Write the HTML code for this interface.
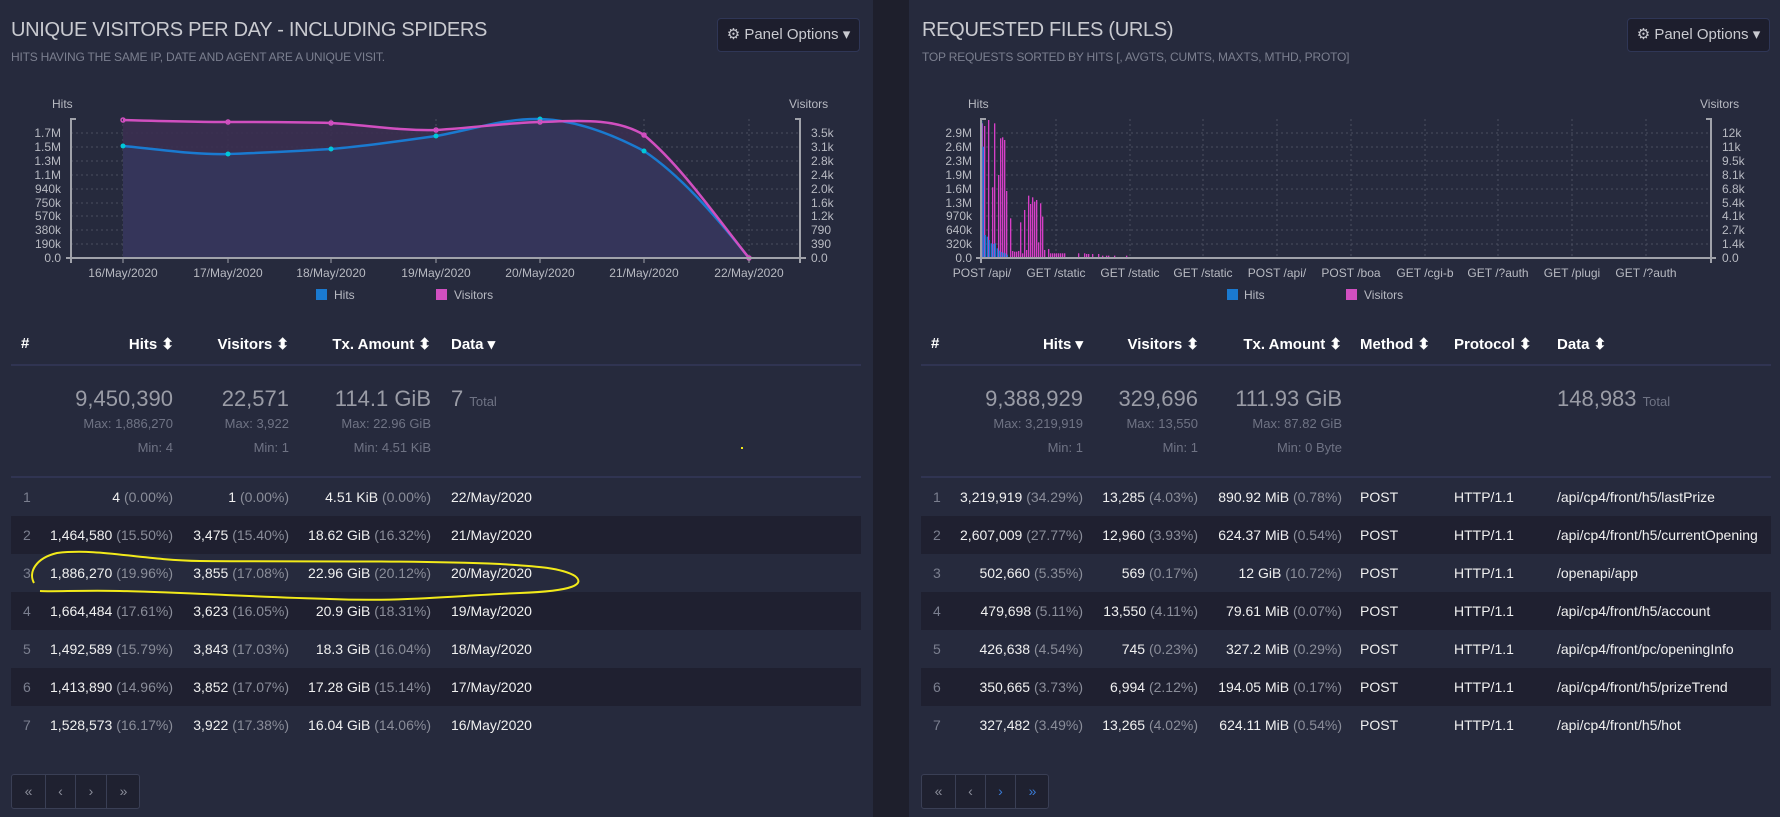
<!DOCTYPE html>
<html><head><meta charset="utf-8">
<style>
*{margin:0;padding:0;box-sizing:border-box}
body{width:1780px;height:817px;background:#262a3d;font-family:"Liberation Sans",sans-serif;position:relative;overflow:hidden;color:#e8e8e8}
.strip{position:absolute;left:873px;top:0;width:36px;height:817px;background:#1e1f2c}
.a{position:absolute;white-space:nowrap}
.title{font-size:20px;color:#c9cad0;letter-spacing:-0.3px}
.sub{font-size:12px;color:#7b7f8f;letter-spacing:-0.2px}
.btn{position:absolute;height:34px;width:143px;background:#1d1e2d;border:1px solid #2f3656;border-radius:4px;color:#c9cad0;font-size:15px;line-height:32px;text-align:center}
.hd{font-weight:bold;font-size:15px;color:#fff}
.r{text-align:right}
.big{font-size:22px;color:#9a9ca6}
.sm{font-size:13px;color:#6f7384}
.row{position:absolute;height:38px}
.band{background:#1f2030}
.t{font-size:14px;color:#f0f0f0}
.p{color:#8a8d99}
.n{font-size:14px;color:#7b7f8f}
.pg{position:absolute;height:35px;border:1px solid #3a3f55;border-radius:3px;background:#1f2130}
.pg span{position:absolute;top:0;height:33px;line-height:32px;text-align:center;color:#8a8d99;font-size:14px;border-right:1px solid #3a3f55}
.w{position:absolute;left:0;width:1780px;height:270px}
</style></head><body>
<div class="strip"></div>

<div class="a title" style="left:11px;top:19px">UNIQUE VISITORS PER DAY - INCLUDING SPIDERS</div>
<div class="a sub" style="left:11px;top:50px">HITS HAVING THE SAME IP, DATE AND AGENT ARE A UNIQUE VISIT.</div>
<div class="btn" style="left:717px;top:18px">&#9881; Panel Options &#9662;</div>

<div class="a title" style="left:922px;top:19px">REQUESTED FILES (URLS)</div>
<div class="a sub" style="left:922px;top:50px">TOP REQUESTS SORTED BY HITS [, AVGTS, CUMTS, MAXTS, MTHD, PROTO]</div>
<div class="btn" style="left:1627px;top:18px">&#9881; Panel Options &#9662;</div>

<svg width="1780" height="817" style="position:absolute;left:0;top:0" font-family="Liberation Sans, sans-serif">
<g font-size="12" fill="#b8bac2">
<text x="52" y="108">Hits</text>
<text x="789" y="108">Visitors</text>
<text x="968" y="108">Hits</text>
<text x="1700" y="108">Visitors</text>
</g>
<g stroke="#4a4e60" stroke-width="1" stroke-dasharray="2,3">
<line x1="71" x2="800" y1="133" y2="133"/><line x1="71" x2="800" y1="147" y2="147"/><line x1="71" x2="800" y1="161" y2="161"/><line x1="71" x2="800" y1="175" y2="175"/><line x1="71" x2="800" y1="189" y2="189"/><line x1="71" x2="800" y1="203" y2="203"/><line x1="71" x2="800" y1="216" y2="216"/><line x1="71" x2="800" y1="230" y2="230"/><line x1="71" x2="800" y1="244" y2="244"/>
<line x1="123" x2="123" y1="119" y2="258"/><line x1="228" x2="228" y1="119" y2="258"/><line x1="331" x2="331" y1="119" y2="258"/><line x1="436" x2="436" y1="119" y2="258"/><line x1="540" x2="540" y1="119" y2="258"/><line x1="644" x2="644" y1="119" y2="258"/><line x1="749" x2="749" y1="119" y2="258"/>
</g>
<path d="M123,120 C158,121 193,122 228,122 C262,122 297,122 331,123 C366,125 401,131 436,130 C471,128 505,123 540,122 C575,121 615,117 644,135 C680,165 715,215 749,258 L123,258Z" fill="#3b2f50" opacity="0.9"/>
<path d="M123,146 C158,149 193,155 228,154 C262,153 297,151 331,149 C366,146 401,141 436,136 C471,130 505,118 540,119 C575,120 610,133 644,151 C680,175 715,215 749,258 L123,258Z" fill="#35355a"/>
<path d="M123,146 C158,149 193,155 228,154 C262,153 297,151 331,149 C366,146 401,141 436,136 C471,130 505,118 540,119 C575,120 610,133 644,151 C680,175 715,215 749,258" fill="none" stroke="#1a7ad0" stroke-width="2.5"/>
<path d="M123,120 C158,121 193,122 228,122 C262,122 297,122 331,123 C366,125 401,131 436,130 C471,128 505,123 540,122 C575,121 615,117 644,135 C680,165 715,215 749,258" fill="none" stroke="#d14fc0" stroke-width="2.5"/>
<g fill="#00c8d8"><circle cx="123" cy="146" r="2.5"/><circle cx="228" cy="154" r="2.5"/><circle cx="331" cy="149" r="2.5"/><circle cx="436" cy="136" r="2.5"/><circle cx="540" cy="119" r="2.5"/><circle cx="644" cy="151" r="2.5"/></g>
<g fill="none" stroke="#d14fc0" stroke-width="1.5"><circle cx="123" cy="120" r="2"/><circle cx="228" cy="122" r="2"/><circle cx="331" cy="123" r="2"/><circle cx="436" cy="130" r="2"/><circle cx="540" cy="122" r="2"/><circle cx="644" cy="135" r="2"/><circle cx="749" cy="258" r="2"/></g>
<g stroke="#a0a2aa" stroke-width="2" fill="none">
<path d="M76,119 H71 V263"/><path d="M66,258 H806"/><path d="M795,119 H800 V263"/>
</g>
<g stroke="#a0a2aa" stroke-width="1"><line x1="123" x2="123" y1="258" y2="263"/><line x1="228" x2="228" y1="258" y2="263"/><line x1="331" x2="331" y1="258" y2="263"/><line x1="436" x2="436" y1="258" y2="263"/><line x1="540" x2="540" y1="258" y2="263"/><line x1="644" x2="644" y1="258" y2="263"/><line x1="749" x2="749" y1="258" y2="263"/></g>
<g font-size="12" fill="#b8bac2" text-anchor="end">
<text x="61" y="137">1.7M</text><text x="61" y="151">1.5M</text><text x="61" y="165">1.3M</text><text x="61" y="179">1.1M</text><text x="61" y="193">940k</text><text x="61" y="207">750k</text><text x="61" y="220">570k</text><text x="61" y="234">380k</text><text x="61" y="248">190k</text><text x="61" y="262">0.0</text>
</g>
<g font-size="12" fill="#b8bac2">
<text x="811" y="137">3.5k</text><text x="811" y="151">3.1k</text><text x="811" y="165">2.8k</text><text x="811" y="179">2.4k</text><text x="811" y="193">2.0k</text><text x="811" y="207">1.6k</text><text x="811" y="220">1.2k</text><text x="811" y="234">790</text><text x="811" y="248">390</text><text x="811" y="262">0.0</text>
</g>
<g font-size="12" fill="#b8bac2" text-anchor="middle">
<text x="123" y="277">16/May/2020</text><text x="228" y="277">17/May/2020</text><text x="331" y="277">18/May/2020</text><text x="436" y="277">19/May/2020</text><text x="540" y="277">20/May/2020</text><text x="644" y="277">21/May/2020</text><text x="749" y="277">22/May/2020</text>
</g>
<rect x="316" y="289" width="11" height="11" fill="#1a7ad0"/><text x="334" y="299" font-size="12" fill="#b8bac2">Hits</text>
<rect x="436" y="289" width="11" height="11" fill="#d14fc0"/><text x="454" y="299" font-size="12" fill="#b8bac2">Visitors</text>

<g stroke="#4a4e60" stroke-width="1" stroke-dasharray="2,3">
<line x1="981" x2="1711" y1="133" y2="133"/><line x1="981" x2="1711" y1="147" y2="147"/><line x1="981" x2="1711" y1="161" y2="161"/><line x1="981" x2="1711" y1="175" y2="175"/><line x1="981" x2="1711" y1="189" y2="189"/><line x1="981" x2="1711" y1="203" y2="203"/><line x1="981" x2="1711" y1="216" y2="216"/><line x1="981" x2="1711" y1="230" y2="230"/><line x1="981" x2="1711" y1="244" y2="244"/>
<line x1="1056" x2="1056" y1="119" y2="258"/><line x1="1130" x2="1130" y1="119" y2="258"/><line x1="1203" x2="1203" y1="119" y2="258"/><line x1="1277" x2="1277" y1="119" y2="258"/><line x1="1351" x2="1351" y1="119" y2="258"/><line x1="1425" x2="1425" y1="119" y2="258"/><line x1="1498" x2="1498" y1="119" y2="258"/><line x1="1572" x2="1572" y1="119" y2="258"/><line x1="1646" x2="1646" y1="119" y2="258"/>
</g>
<g transform="translate(960,100) scale(0.3333)">
<g fill="#d63fc6">
<rect x="65" y="70" width="4" height="402"/><rect x="72" y="78" width="4" height="394"/><rect x="84" y="60" width="4" height="412"/><rect x="96" y="262" width="4" height="210"/><rect x="102" y="70" width="4" height="402"/><rect x="114" y="225" width="4" height="247"/><rect x="120" y="115" width="4" height="357"/><rect x="126" y="112" width="4" height="360"/><rect x="132" y="120" width="4" height="352"/><rect x="138" y="273" width="4" height="199"/><rect x="150" y="355" width="4" height="117"/><rect x="156" y="453" width="4" height="19"/><rect x="162" y="455" width="4" height="17"/><rect x="168" y="455" width="4" height="17"/><rect x="174" y="453" width="4" height="19"/><rect x="180" y="367" width="4" height="105"/><rect x="186" y="460" width="4" height="12"/><rect x="192" y="330" width="4" height="142"/><rect x="198" y="450" width="4" height="22"/><rect x="204" y="287" width="4" height="185"/><rect x="210" y="312" width="4" height="160"/><rect x="216" y="292" width="4" height="180"/><rect x="222" y="305" width="4" height="167"/><rect x="228" y="300" width="4" height="172"/><rect x="234" y="427" width="4" height="45"/><rect x="240" y="310" width="4" height="162"/><rect x="246" y="350" width="4" height="122"/><rect x="252" y="450" width="4" height="22"/><rect x="264" y="447" width="4" height="25"/>
<rect x="270" y="460" width="4" height="12"/><rect x="276" y="460" width="4" height="12"/><rect x="282" y="460" width="4" height="12"/><rect x="288" y="460" width="4" height="12"/><rect x="294" y="460" width="4" height="12"/><rect x="300" y="460" width="4" height="12"/><rect x="306" y="460" width="4" height="12"/><rect x="312" y="460" width="4" height="12"/><rect x="354" y="460" width="4" height="12"/><rect x="372" y="460" width="4" height="12"/><rect x="378" y="462" width="4" height="10"/><rect x="384" y="462" width="4" height="10"/><rect x="396" y="462" width="4" height="10"/><rect x="414" y="462" width="4" height="10"/><rect x="426" y="467" width="4" height="5"/><rect x="438" y="467" width="4" height="5"/><rect x="444" y="467" width="4" height="5"/><rect x="462" y="467" width="4" height="5"/><rect x="498" y="467" width="4" height="5"/>
</g>
<g fill="#1a7ad0">
<rect x="62" y="62" width="5" height="410"/><rect x="68" y="140" width="4" height="332"/><rect x="74" y="405" width="4" height="67"/><rect x="80" y="410" width="4" height="62"/><rect x="86" y="420" width="4" height="52"/><rect x="92" y="430" width="4" height="42"/><rect x="98" y="432" width="4" height="40"/><rect x="104" y="430" width="4" height="42"/><rect x="110" y="445" width="4" height="27"/><rect x="116" y="452" width="4" height="20"/><rect x="122" y="456" width="4" height="16"/><rect x="128" y="458" width="4" height="14"/><rect x="134" y="460" width="4" height="12"/><rect x="140" y="464" width="4" height="8"/>
</g>
</g>
<g stroke="#a0a2aa" stroke-width="2" fill="none">
<path d="M986,119 H981 V263"/><path d="M976,258 H1716"/><path d="M1706,119 H1711 V263"/>
</g>
<g font-size="12" fill="#b8bac2" text-anchor="end">
<text x="972" y="137">2.9M</text><text x="972" y="151">2.6M</text><text x="972" y="165">2.3M</text><text x="972" y="179">1.9M</text><text x="972" y="193">1.6M</text><text x="972" y="207">1.3M</text><text x="972" y="220">970k</text><text x="972" y="234">640k</text><text x="972" y="248">320k</text><text x="972" y="262">0.0</text>
</g>
<g font-size="12" fill="#b8bac2">
<text x="1722" y="137">12k</text><text x="1722" y="151">11k</text><text x="1722" y="165">9.5k</text><text x="1722" y="179">8.1k</text><text x="1722" y="193">6.8k</text><text x="1722" y="207">5.4k</text><text x="1722" y="220">4.1k</text><text x="1722" y="234">2.7k</text><text x="1722" y="248">1.4k</text><text x="1722" y="262">0.0</text>
</g>
<g font-size="12" fill="#b8bac2" text-anchor="middle">
<text x="982" y="277">POST /api/</text><text x="1056" y="277">GET /static</text><text x="1130" y="277">GET /static</text><text x="1203" y="277">GET /static</text><text x="1277" y="277">POST /api/</text><text x="1351" y="277">POST /boa</text><text x="1425" y="277">GET /cgi-b</text><text x="1498" y="277">GET /?auth</text><text x="1572" y="277">GET /plugi</text><text x="1646" y="277">GET /?auth</text>
</g>
<rect x="1227" y="289" width="11" height="11" fill="#1a7ad0"/><text x="1244" y="299" font-size="12" fill="#b8bac2">Hits</text>
<rect x="1346" y="289" width="11" height="11" fill="#d14fc0"/><text x="1364" y="299" font-size="12" fill="#b8bac2">Visitors</text>

<line x1="11" x2="861" y1="365" y2="365" stroke="#33385a" stroke-width="1.5"/>
<line x1="11" x2="861" y1="477" y2="477" stroke="#33385a" stroke-width="1.5"/>
<line x1="921" x2="1771" y1="365" y2="365" stroke="#33385a" stroke-width="1.5"/>
<line x1="921" x2="1771" y1="477" y2="477" stroke="#33385a" stroke-width="1.5"/>
</svg>

<div class="row band" style="left:11px;top:516px;width:850px"></div>
<div class="row band" style="left:11px;top:592px;width:850px"></div>
<div class="row band" style="left:11px;top:668px;width:850px"></div>
<div class="row band" style="left:921px;top:516px;width:850px"></div>
<div class="row band" style="left:921px;top:592px;width:850px"></div>
<div class="row band" style="left:921px;top:668px;width:850px"></div>

<div class="a hd" style="left:21px;top:335px">#</div>
<div class="a hd r" style="right:1606px;top:335px">Hits &#11021;</div>
<div class="a hd r" style="right:1491px;top:335px">Visitors &#11021;</div>
<div class="a hd r" style="right:1349px;top:335px">Tx. Amount &#11021;</div>
<div class="a hd" style="left:451px;top:335px">Data &#9662;</div>

<div class="a big r" style="right:1607px;top:386px">9,450,390</div>
<div class="a big r" style="right:1491px;top:386px">22,571</div>
<div class="a big r" style="right:1349px;top:386px">114.1 GiB</div>
<div class="a big" style="left:451px;top:386px">7 <span style="font-size:13px;color:#6f7384">Total</span></div>
<div class="a sm r" style="right:1607px;top:416px">Max: 1,886,270</div>
<div class="a sm r" style="right:1491px;top:416px">Max: 3,922</div>
<div class="a sm r" style="right:1349px;top:416px">Max: 22.96 GiB</div>
<div class="a sm r" style="right:1607px;top:440px">Min: 4</div>
<div class="a sm r" style="right:1491px;top:440px">Min: 1</div>
<div class="a sm r" style="right:1349px;top:440px">Min: 4.51 KiB</div>

<div class="w" style="top:489px">
<div class="a n" style="left:23px;top:0">1</div><div class="a t r" style="right:1607px;top:0">4 <span class="p">(0.00%)</span></div><div class="a t r" style="right:1491px;top:0">1 <span class="p">(0.00%)</span></div><div class="a t r" style="right:1349px;top:0">4.51 KiB <span class="p">(0.00%)</span></div><div class="a t" style="left:451px;top:0">22/May/2020</div>
<div class="a n" style="left:23px;top:38px">2</div><div class="a t r" style="right:1607px;top:38px">1,464,580 <span class="p">(15.50%)</span></div><div class="a t r" style="right:1491px;top:38px">3,475 <span class="p">(15.40%)</span></div><div class="a t r" style="right:1349px;top:38px">18.62 GiB <span class="p">(16.32%)</span></div><div class="a t" style="left:451px;top:38px">21/May/2020</div>
<div class="a n" style="left:23px;top:76px">3</div><div class="a t r" style="right:1607px;top:76px">1,886,270 <span class="p">(19.96%)</span></div><div class="a t r" style="right:1491px;top:76px">3,855 <span class="p">(17.08%)</span></div><div class="a t r" style="right:1349px;top:76px">22.96 GiB <span class="p">(20.12%)</span></div><div class="a t" style="left:451px;top:76px">20/May/2020</div>
<div class="a n" style="left:23px;top:114px">4</div><div class="a t r" style="right:1607px;top:114px">1,664,484 <span class="p">(17.61%)</span></div><div class="a t r" style="right:1491px;top:114px">3,623 <span class="p">(16.05%)</span></div><div class="a t r" style="right:1349px;top:114px">20.9 GiB <span class="p">(18.31%)</span></div><div class="a t" style="left:451px;top:114px">19/May/2020</div>
<div class="a n" style="left:23px;top:152px">5</div><div class="a t r" style="right:1607px;top:152px">1,492,589 <span class="p">(15.79%)</span></div><div class="a t r" style="right:1491px;top:152px">3,843 <span class="p">(17.03%)</span></div><div class="a t r" style="right:1349px;top:152px">18.3 GiB <span class="p">(16.04%)</span></div><div class="a t" style="left:451px;top:152px">18/May/2020</div>
<div class="a n" style="left:23px;top:190px">6</div><div class="a t r" style="right:1607px;top:190px">1,413,890 <span class="p">(14.96%)</span></div><div class="a t r" style="right:1491px;top:190px">3,852 <span class="p">(17.07%)</span></div><div class="a t r" style="right:1349px;top:190px">17.28 GiB <span class="p">(15.14%)</span></div><div class="a t" style="left:451px;top:190px">17/May/2020</div>
<div class="a n" style="left:23px;top:228px">7</div><div class="a t r" style="right:1607px;top:228px">1,528,573 <span class="p">(16.17%)</span></div><div class="a t r" style="right:1491px;top:228px">3,922 <span class="p">(17.38%)</span></div><div class="a t r" style="right:1349px;top:228px">16.04 GiB <span class="p">(14.06%)</span></div><div class="a t" style="left:451px;top:228px">16/May/2020</div>
</div>

<div class="a hd" style="left:931px;top:335px">#</div>
<div class="a hd r" style="right:697px;top:335px">Hits &#9662;</div>
<div class="a hd r" style="right:581px;top:335px">Visitors &#11021;</div>
<div class="a hd r" style="right:438px;top:335px">Tx. Amount &#11021;</div>
<div class="a hd" style="left:1360px;top:335px">Method &#11021;</div>
<div class="a hd" style="left:1454px;top:335px">Protocol &#11021;</div>
<div class="a hd" style="left:1557px;top:335px">Data &#11021;</div>

<div class="a big r" style="right:697px;top:386px">9,388,929</div>
<div class="a big r" style="right:582px;top:386px">329,696</div>
<div class="a big r" style="right:438px;top:386px">111.93 GiB</div>
<div class="a big" style="left:1557px;top:386px">148,983 <span style="font-size:13px;color:#6f7384">Total</span></div>
<div class="a sm r" style="right:697px;top:416px">Max: 3,219,919</div>
<div class="a sm r" style="right:582px;top:416px">Max: 13,550</div>
<div class="a sm r" style="right:438px;top:416px">Max: 87.82 GiB</div>
<div class="a sm r" style="right:697px;top:440px">Min: 1</div>
<div class="a sm r" style="right:582px;top:440px">Min: 1</div>
<div class="a sm r" style="right:438px;top:440px">Min: 0 Byte</div>

<div class="w" style="top:489px">
<div class="a n" style="left:933px;top:0">1</div><div class="a t r" style="right:697px;top:0">3,219,919 <span class="p">(34.29%)</span></div><div class="a t r" style="right:582px;top:0">13,285 <span class="p">(4.03%)</span></div><div class="a t r" style="right:438px;top:0">890.92 MiB <span class="p">(0.78%)</span></div><div class="a t" style="left:1360px;top:0">POST</div><div class="a t" style="left:1454px;top:0">HTTP/1.1</div><div class="a t" style="left:1557px;top:0">/api/cp4/front/h5/lastPrize</div>
<div class="a n" style="left:933px;top:38px">2</div><div class="a t r" style="right:697px;top:38px">2,607,009 <span class="p">(27.77%)</span></div><div class="a t r" style="right:582px;top:38px">12,960 <span class="p">(3.93%)</span></div><div class="a t r" style="right:438px;top:38px">624.37 MiB <span class="p">(0.54%)</span></div><div class="a t" style="left:1360px;top:38px">POST</div><div class="a t" style="left:1454px;top:38px">HTTP/1.1</div><div class="a t" style="left:1557px;top:38px">/api/cp4/front/h5/currentOpening</div>
<div class="a n" style="left:933px;top:76px">3</div><div class="a t r" style="right:697px;top:76px">502,660 <span class="p">(5.35%)</span></div><div class="a t r" style="right:582px;top:76px">569 <span class="p">(0.17%)</span></div><div class="a t r" style="right:438px;top:76px">12 GiB <span class="p">(10.72%)</span></div><div class="a t" style="left:1360px;top:76px">POST</div><div class="a t" style="left:1454px;top:76px">HTTP/1.1</div><div class="a t" style="left:1557px;top:76px">/openapi/app</div>
<div class="a n" style="left:933px;top:114px">4</div><div class="a t r" style="right:697px;top:114px">479,698 <span class="p">(5.11%)</span></div><div class="a t r" style="right:582px;top:114px">13,550 <span class="p">(4.11%)</span></div><div class="a t r" style="right:438px;top:114px">79.61 MiB <span class="p">(0.07%)</span></div><div class="a t" style="left:1360px;top:114px">POST</div><div class="a t" style="left:1454px;top:114px">HTTP/1.1</div><div class="a t" style="left:1557px;top:114px">/api/cp4/front/h5/account</div>
<div class="a n" style="left:933px;top:152px">5</div><div class="a t r" style="right:697px;top:152px">426,638 <span class="p">(4.54%)</span></div><div class="a t r" style="right:582px;top:152px">745 <span class="p">(0.23%)</span></div><div class="a t r" style="right:438px;top:152px">327.2 MiB <span class="p">(0.29%)</span></div><div class="a t" style="left:1360px;top:152px">POST</div><div class="a t" style="left:1454px;top:152px">HTTP/1.1</div><div class="a t" style="left:1557px;top:152px">/api/cp4/front/pc/openingInfo</div>
<div class="a n" style="left:933px;top:190px">6</div><div class="a t r" style="right:697px;top:190px">350,665 <span class="p">(3.73%)</span></div><div class="a t r" style="right:582px;top:190px">6,994 <span class="p">(2.12%)</span></div><div class="a t r" style="right:438px;top:190px">194.05 MiB <span class="p">(0.17%)</span></div><div class="a t" style="left:1360px;top:190px">POST</div><div class="a t" style="left:1454px;top:190px">HTTP/1.1</div><div class="a t" style="left:1557px;top:190px">/api/cp4/front/h5/prizeTrend</div>
<div class="a n" style="left:933px;top:228px">7</div><div class="a t r" style="right:697px;top:228px">327,482 <span class="p">(3.49%)</span></div><div class="a t r" style="right:582px;top:228px">13,265 <span class="p">(4.02%)</span></div><div class="a t r" style="right:438px;top:228px">624.11 MiB <span class="p">(0.54%)</span></div><div class="a t" style="left:1360px;top:228px">POST</div><div class="a t" style="left:1454px;top:228px">HTTP/1.1</div><div class="a t" style="left:1557px;top:228px">/api/cp4/front/h5/hot</div>
</div>

<div class="pg" style="left:11px;top:774px;width:129px">
<span style="left:0;width:34px">&laquo;</span><span style="left:34px;width:30px">&lsaquo;</span><span style="left:64px;width:31px">&rsaquo;</span><span style="left:95px;width:33px;border:none">&raquo;</span>
</div>
<div class="pg" style="left:921px;top:774px;width:128px">
<span style="left:0;width:34px">&laquo;</span><span style="left:34px;width:30px">&lsaquo;</span><span style="left:64px;width:30px;color:#3a7bd5">&rsaquo;</span><span style="left:94px;width:33px;border:none;color:#3a7bd5">&raquo;</span>
</div>

<svg width="1780" height="817" style="position:absolute;left:0;top:0">
<path d="M34,583 C28,572 36,558 57,553 C100,548 140,560 200,561 C300,562 400,560 500,564 C530,566 560,567 575,576 C585,584 575,591 520,593 C450,596 400,602 330,599 C250,597 180,592 120,591 C80,590 55,592 40,591" fill="none" stroke="#f2ea1a" stroke-width="2"/>
<rect x="741" y="447" width="2" height="2" fill="#f2ea1a"/>
</svg>
</body></html>
